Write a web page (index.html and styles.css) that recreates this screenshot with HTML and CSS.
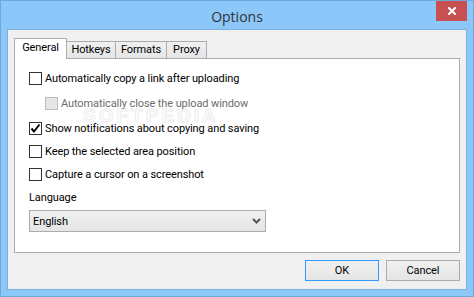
FILE: index.html
```html
<!DOCTYPE html>
<html>
<head>
<meta charset="utf-8">
<link rel="stylesheet" href="styles.css">
</head>
<body>
<div class="window">
  <div class="titlebar">
    <div class="title">Options</div>
    <div class="close"><svg width="8" height="8" viewBox="0 0 8 8"><path d="M1 1L7 7M7 1L1 7" stroke="#fff" stroke-width="2" stroke-linecap="square"/></svg></div>
  </div>
  <div class="client">
    <div class="tabs">
      <div class="tab active">General</div>
      <div class="tab t-hot">Hotkeys</div>
      <div class="tab t-fmt">Formats</div>
      <div class="tab t-proxy">Proxy</div>
    </div>
    <div class="panel">
      <div class="watermark">SOFTPEDIA</div>
      <div class="row r1"><span class="cb"></span><span>Automatically copy a link after uploading</span></div>
      <div class="row r2 sub disabled"><span class="cb"></span><span>Automatically close the upload window</span></div>
      <div class="row r3"><span class="cb checked"><svg width="11" height="11" viewBox="0 0 11 11"><path d="M1.5 5.5L4 8.5L9.5 1.5" stroke="#000" stroke-width="2" fill="none"/></svg></span><span>Show notifications about copying and saving</span></div>
      <div class="row r4"><span class="cb"></span><span>Keep the selected area position</span></div>
      <div class="row r5"><span class="cb"></span><span>Capture a cursor on a screenshot</span></div>
      <div class="lang-label">Language</div>
      <div class="select"><span>English</span><svg width="9" height="6" viewBox="0 0 9 6"><path d="M1 1L4.5 4.5L8 1" stroke="#555" stroke-width="2" fill="none"/></svg></div>
    </div>
    <div class="buttons">
      <div class="btn default">OK</div>
      <div class="btn">Cancel</div>
    </div>
  </div>
</div>
</body>
</html>
```
FILE: styles.css
```css
* { box-sizing: border-box; }
html, body { margin: 0; padding: 0; }
body {
  width: 474px; height: 297px; overflow: hidden;
  font-family: Roboto, "Liberation Sans", sans-serif;
  font-size: 11px; letter-spacing: -0.1px; color: #000;
}
.window {
  width: 474px; height: 297px;
  border: 1px solid #6fa9dc;
  background: #8bc7f8;
  display: flex; flex-direction: column;
}
.titlebar {
  height: 28px;
  position: relative;
  display: flex; align-items: center; justify-content: center;
}
.title {
  font-family: "Open Sans", "Noto Sans", sans-serif;
  font-size: 14px; letter-spacing: 0; color: #333;
  margin-top: 2px;
}
.close {
  position: absolute; right: 6px; top: 0;
  width: 31px; height: 20px;
  background: #c75050;
  display: flex; align-items: center; justify-content: center;
}
.client {
  margin: 0 6px 6px 6px;
  flex: 1;
  border: 1px solid #7eaedb;
  background: #f0f0f0;
  display: flex; flex-direction: column;
}
.tabs {
  display: flex; align-items: flex-end;
  margin: 8px 0 0 6px;
  height: 20px;
  position: relative; z-index: 1;
}
.tab {
  height: 17px;
  border: 1px solid #acacac; border-bottom: none;
  background: linear-gradient(#f0f0f0, #e5e5e5);
  margin-left: -1px;
  display: flex; align-items: center; justify-content: center;
  line-height: 1;
  padding-bottom: 1px;
}
.tab.active {
  margin-left: 0;
  height: 21px; margin-bottom: -1px;
  background: #fff;
  width: 53px;
  position: relative; z-index: 2;
  padding-bottom: 4px;
}
.t-hot { width: 50px; }
.t-fmt { width: 52px; }
.t-proxy { width: 41px; }
.panel {
  margin: 0 6px 0 6px;
  height: 195px;
  border: 1px solid #acacac;
  background: #fff;
  padding: 13px 0 0 14px;
  position: relative;
}
.watermark {
  position: absolute; left: 68px; top: 46px;
  font-family: "Liberation Sans", sans-serif;
  font-weight: bold; font-size: 19px; letter-spacing: 3px;
  color: #fff;
  -webkit-text-stroke: 1px #ededed;
}
.row { display: flex; align-items: center; height: 13px; white-space: nowrap; position: relative; }
.row .cb { margin-right: 3px; }
.r2 { margin-top: 12px; padding-left: 16px; }
.r3 { margin-top: 12px; }
.r4 { margin-top: 10px; }
.r5 { margin-top: 10px; }
.cb {
  width: 13px; height: 13px; flex: none;
  border: 1px solid #333;
  background: #fff;
  display: flex; align-items: center; justify-content: center;
}
.disabled { color: #6d6d6d; }
.disabled .cb { border-color: #bcbcbc; background: #e6e6e6; }
.lang-label { margin-top: 9px; height: 15px; line-height: 15px; }
.select {
  margin-top: 5px;
  width: 237px; height: 22px;
  border: 1px solid #acacac;
  background: linear-gradient(#f0f0f0, #e5e5e5);
  display: flex; align-items: center; justify-content: space-between;
  padding: 0 4px 0 3px;
}
.buttons {
  display: flex; justify-content: flex-end;
  margin: 7px 6px 0 0;
  gap: 7px;
}
.btn {
  width: 74px; height: 21px;
  border: 1px solid #acacac;
  background: linear-gradient(#f0f0f0, #e5e5e5);
  display: flex; align-items: center; justify-content: center;
}
.btn.default { border-color: #3399ff; }
```
